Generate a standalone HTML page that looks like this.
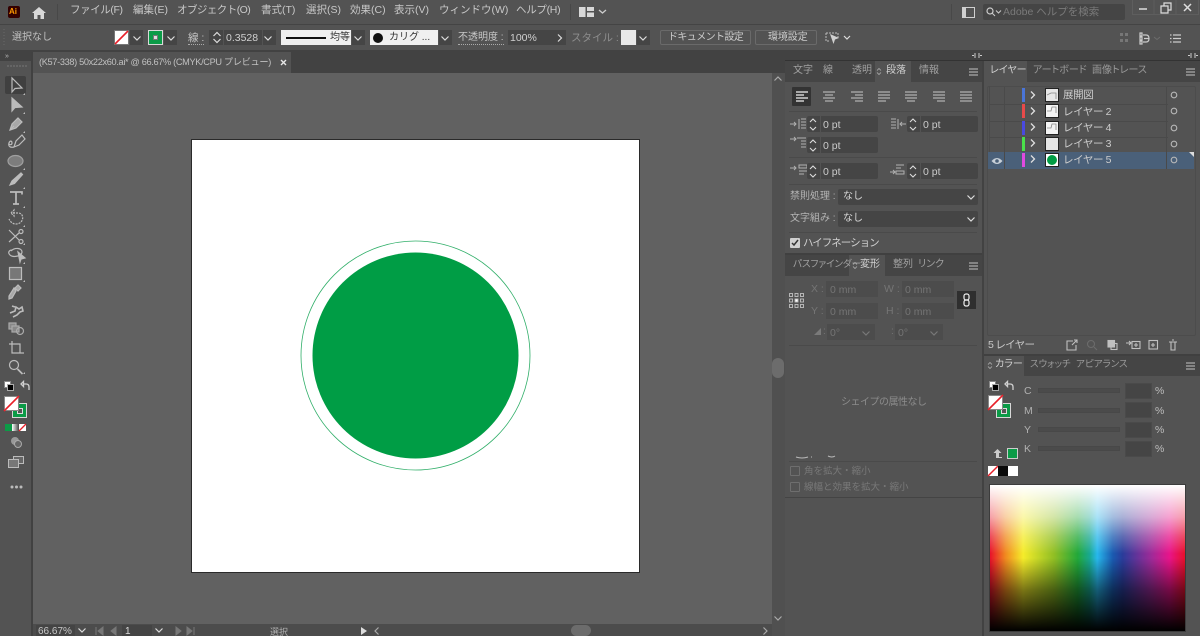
<!DOCTYPE html>
<html lang="ja"><head><meta charset="utf-8"><title>Illustrator</title>
<style>
html,body{margin:0;padding:0;width:1200px;height:636px;overflow:hidden;background:#535353}
body{position:relative;font-family:"Liberation Sans","Noto Sans CJK JP",sans-serif;font-size:10px;color:#c4c4c4}
body>*{filter:blur(.3px)}
.a{position:absolute;display:block;box-sizing:border-box}
.t{position:absolute;white-space:nowrap;line-height:14px;height:14px}
.m{font-size:10.5px;color:#c8c8c8;top:3px}
.p{font-feature-settings:"palt"}
.f{position:absolute;background:#454545;box-sizing:border-box}
.dim{color:#7a7a7a}
svg{position:absolute;overflow:visible}
.r{position:absolute;left:989px;width:178px;height:18px;border-bottom:1px solid #4a4a4a;border-left:1px solid #4a4a4a}
.lab{font-size:10.5px;color:#cccccc;left:1063px;letter-spacing:-.4px}
.th{position:absolute;left:1045px;width:14px;height:14px;background:#e6e6e6;border:1px solid #222;box-sizing:border-box}
</style></head><body>
<!-- top bars -->
<div class="a" style="left:0;top:0;width:1200px;height:24px;background:#535353"></div>
<div class="a" style="left:0;top:24px;width:1200px;height:1px;background:#444"></div>
<div class="a" style="left:0;top:50px;width:1200px;height:2px;background:#424242"></div>
<div class="a" style="left:8px;top:6px;width:12px;height:12px;background:#330000;border-radius:2px"></div>
<div class="t" style="left:9px;top:5px;font-size:8px;font-weight:bold;color:#ff9a00">Ai</div>
<svg style="left:31px;top:6px" width="16" height="14"><path d="M1 7L8 1l7 6h-2v6H9.500V9h-3v4H3V7z" fill="#d8d8d8"/></svg>
<div class="a" style="left:57px;top:4px;width:1px;height:16px;background:#484848"></div>
<span class="t m" style="left:70px;letter-spacing:-.4px">ファイル(F)</span>
<span class="t m" style="left:133px">編集(E)</span>
<span class="t m" style="left:177px;letter-spacing:-.55px">オブジェクト(O)</span>
<span class="t m" style="left:261px">書式(T)</span>
<span class="t m" style="left:306px">選択(S)</span>
<span class="t m" style="left:350px">効果(C)</span>
<span class="t m" style="left:394px">表示(V)</span>
<span class="t m" style="left:439px">ウィンドウ(W)</span>
<span class="t m" style="left:516px;letter-spacing:-.3px">ヘルプ(H)</span>
<div class="a" style="left:570px;top:4px;width:1px;height:16px;background:#484848"></div>
<svg style="left:579px;top:7px" width="28" height="10"><path d="M0 0h6.500v10H0zM8 0h7v4H8zM8 5.500h7V10H8z" fill="#d8d8d8"/><path d="M20 3l3.500 3L27 3" fill="none" stroke="#ccc" stroke-width="1.300"/></svg>
<div class="a" style="left:951px;top:4px;width:1px;height:16px;background:#484848"></div>
<svg style="left:962px;top:7px" width="13" height="11"><rect x=".5" y=".5" width="12" height="10" fill="none" stroke="#d0d0d0"/><rect x="1" y="1" width="3" height="9" fill="#d0d0d0"/></svg>
<div class="f" style="left:983px;top:4px;width:142px;height:16px;border-radius:2px"></div>
<svg style="left:986px;top:7px" width="16" height="10"><circle cx="4" cy="4" r="3" fill="none" stroke="#ccc" stroke-width="1.200"/><path d="M6 6l3 3M10 3.500l2.500 2.500L15 3.500" fill="none" stroke="#ccc"/></svg>
<span class="t dim" style="left:1003px;top:5px;font-size:10.500px">Adobe ヘルプを検索</span>
<svg style="left:1132px;top:0" width="68" height="15"><path d="M.5 0v14.500h66V0M22 0v14.500M44 0v14.500" fill="none" stroke="#5e5e5e"/><path d="M7 9h8" stroke="#ddd" stroke-width="1.500"/><path d="M29 6h7v7h-7zM32 6V3h7v7h-3" fill="none" stroke="#ddd" stroke-width="1.200"/><path d="M52 4l7 7M59 4l-7 7" stroke="#ddd" stroke-width="1.500"/></svg>

<!-- control bar -->
<svg style="left:3px;top:29px" width="3" height="18"><path d="M1 0v18" stroke="#6a6a6a" stroke-dasharray="1 2"/></svg>
<span class="t" style="left:12px;top:31px;font-size:10px;color:#c0c0c0">選択なし</span>
<div class="a" style="left:114px;top:30px;width:15px;height:15px;background:#fff;border:1px solid #777"></div>
<svg style="left:114px;top:30px" width="15" height="15"><path d="M1 14L14 1" stroke="#e8202a" stroke-width="1.600"/></svg>
<div class="f" style="left:130px;top:30px;width:13px;height:15px"></div>
<svg style="left:133px;top:36px" width="8" height="5"><path d="M.5.500L4 4 7.500.500" fill="none" stroke="#ddd" stroke-width="1.200"/></svg>
<div class="a" style="left:148px;top:30px;width:15px;height:15px;background:#0b9b47;border:1px solid #d8d8d8"></div>
<div class="a" style="left:153px;top:35px;width:5px;height:5px;background:#ddd;border:1px solid #777"></div>
<div class="f" style="left:164px;top:30px;width:13px;height:15px"></div>
<svg style="left:167px;top:36px" width="8" height="5"><path d="M.5.500L4 4 7.500.500" fill="none" stroke="#ddd" stroke-width="1.200"/></svg>
<span class="t" style="left:188px;top:31px;font-size:10.500px;color:#c8c8c8;border-bottom:1px dotted #aaa;height:13px">線 :</span>
<div class="f" style="left:209px;top:30px;width:67px;height:15px"></div>
<svg style="left:212px;top:31px" width="10" height="13"><path d="M1.500 5L5 1.500 8.500 5M1.500 8L5 11.500 8.500 8" fill="none" stroke="#ddd" stroke-width="1.200"/></svg>
<div class="a" style="left:223px;top:30px;width:1px;height:15px;background:#535353"></div>
<div class="a" style="left:262px;top:30px;width:1px;height:15px;background:#535353"></div>
<span class="t" style="left:226px;top:31px;font-size:10.500px;color:#d0d0d0">0.3528</span>
<svg style="left:264px;top:36px" width="8" height="5"><path d="M.5.500L4 4 7.500.500" fill="none" stroke="#ddd" stroke-width="1.200"/></svg>
<div class="a" style="left:281px;top:30px;width:70px;height:15px;background:#f0f0f0"></div>
<div class="a" style="left:286px;top:37px;width:40px;height:2px;background:#111"></div>
<span class="t" style="left:330px;top:31px;font-size:10px;color:#333">均等</span>
<div class="f" style="left:352px;top:30px;width:13px;height:15px"></div>
<svg style="left:354px;top:36px" width="8" height="5"><path d="M.5.500L4 4 7.500.500" fill="none" stroke="#ddd" stroke-width="1.200"/></svg>
<div class="a" style="left:370px;top:30px;width:68px;height:15px;background:#f0f0f0"></div>
<div class="a" style="left:373px;top:33px;width:10px;height:10px;background:#111;border-radius:50%"></div>
<span class="t" style="left:389px;top:31px;font-size:10px;color:#333">カリグ ...</span>
<div class="f" style="left:439px;top:30px;width:13px;height:15px"></div>
<svg style="left:441px;top:36px" width="8" height="5"><path d="M.5.500L4 4 7.500.500" fill="none" stroke="#ddd" stroke-width="1.200"/></svg>
<span class="t" style="left:458px;top:31px;font-size:10px;color:#c8c8c8;border-bottom:1px dotted #aaa;height:13px">不透明度 :</span>
<div class="f" style="left:508px;top:30px;width:58px;height:15px"></div>
<span class="t" style="left:510px;top:31px;font-size:10.500px;color:#d0d0d0">100%</span>
<svg style="left:557px;top:34px" width="6" height="8"><path d="M1 .500L4.500 4 1 7.500" fill="none" stroke="#ddd" stroke-width="1.200"/></svg>
<span class="t dim" style="left:571px;top:31px;font-size:10.500px;color:#8e8e8e">スタイル :</span>
<div class="a" style="left:621px;top:30px;width:15px;height:15px;background:#e8e8e8"></div>
<div class="f" style="left:637px;top:30px;width:13px;height:15px"></div>
<svg style="left:639px;top:36px" width="8" height="5"><path d="M.5.500L4 4 7.500.500" fill="none" stroke="#ddd" stroke-width="1.200"/></svg>
<div class="a" style="left:660px;top:30px;width:91px;height:15px;border:1px solid #6a6a6a;border-radius:2px"></div>
<span class="t" style="left:668px;top:31px;font-size:10px;color:#cccccc;letter-spacing:-.6px">ドキュメント設定</span>
<div class="a" style="left:755px;top:30px;width:62px;height:15px;border:1px solid #6a6a6a;border-radius:2px"></div>
<span class="t" style="left:768px;top:31px;font-size:10px;color:#cccccc;letter-spacing:-.1px">環境設定</span>
<svg style="left:825px;top:31px" width="26" height="14"><path d="M1 2h12v5M1 2v8h4" fill="none" stroke="#bbb" stroke-dasharray="2 1"/><path d="M5 3l9 4-4 1.500L8.500 13z" fill="#d0d0d0"/><path d="M19 5l3 3 3-3" fill="none" stroke="#ddd" stroke-width="1.200"/></svg>
<svg style="left:1119px;top:32px" width="64" height="13"><path d="M1 1h3v3H1zM6 1h3v3H6zM1 7h3v3H1zM6 7h3v3H6z" fill="#777"/><path d="M21 1h2v3h-2zM21 5h2v3h-2zM21 9h2v3h-2zM24 3h3q3 0 3 3.500T27 10h-3M25 6.500h5" fill="none" stroke="#ccc" stroke-width="1.200"/><path d="M35 5l3 2.500L41 5" fill="none" stroke="#6c6c6c"/><path d="M51 3h1.500M54 3h8M51 6.500h1.500M54 6.500h8M51 10h1.500M54 10h8" stroke="#ccc" stroke-width="1.300"/></svg>

<!-- left toolbar region -->
<div class="a" style="left:0;top:52px;width:33px;height:584px;background:#535353"></div>
<div class="a" style="left:0;top:52px;width:33px;height:9px;background:#424242"></div>
<div class="t" style="left:5px;top:50px;font-size:7px;color:#bbb">»</div>
<svg style="left:7px;top:65px" width="20" height="2"><path d="M0 1h20" stroke="#777" stroke-dasharray="2 1"/></svg>
<div class="a" style="left:31px;top:52px;width:2px;height:584px;background:#414141"></div>
<div class="a" style="left:5px;top:76px;width:21px;height:18px;background:#404040;border-radius:2px"></div>
<svg style="left:0;top:72px" width="32" height="420">
<g fill="none" stroke="#bcbcbc" stroke-width="1.200">
<path d="M12 6v14l3-3.500 7-.5z"/>
<path d="M12 26v13l3-3.500 7-.5z" fill="#bcbcbc"/>
<path d="M10 58l2-6 6-6 4 4-6 6zM10 58l4-4" fill="#a8a8a8"/>
<path d="M14 75l2-6 6-6 3 4-6 6zM14 75c-4 1-6-1-5-4s3-2 3 0-2 2-3 1"/>
<ellipse cx="15.500" cy="89" rx="7.500" ry="5.500" fill="#7d7d7d" stroke="#a0a0a0"/>
<path d="M10 113l2-4 9-8 1.500 1.500-8 9z" fill="#bcbcbc"/>
<path d="M10 120h12v2.500M16 120v12M13 132h6" stroke-width="1.700"/>
<path d="M11 141l3-3v6zM13 141h5c7 0 6 11-2 11-4 0-6-3-7-5" stroke-dasharray="2 1"/>
<path d="M9 158l10 10M9 170l10-9"/>
<circle cx="21" cy="159.500" r="2"/><circle cx="21" cy="169.500" r="2"/>
<path d="M11 179c4-4 11-3 11 1s-9 6-12 3 0-5 2-5"/>
<path d="M18 180l7 6-4 1-1 3z" fill="#bcbcbc"/>
<rect x="9.500" y="195.500" width="12" height="12" fill="#777"/>
<path d="M14 216l2 3-4 7-3 1 0-3zM15 216l3-3 3 3-3 3z" fill="#a8a8a8"/>
<path d="M10 241l5-2 1-4 3 2 3-2 1 4-3 1-3 3-4 2M12 234l3 1" stroke-width="1.600"/>
<rect x="9" y="251" width="7" height="6" fill="#888" stroke="#aaa"/><rect x="12" y="254" width="7" height="6" fill="#888" stroke="#aaa"/><circle cx="20" cy="259" r="3.500" stroke="#aaa"/>
<path d="M12 269v12h12M9 272h11v9"/>
<circle cx="14" cy="293" r="4.500"/><path d="M17.500 297l5 5" stroke-width="1.700"/>
</g>
<g fill="#bcbcbc"><path d="M25 21l-2 2h2zM25 40l-2 2h2zM25 59l-2 2h2zM25 96l-2 2h2zM25 115l-2 2h2zM25 134l-2 2h2zM25 153l-2 2h2zM25 171l-2 2h2zM25 190l-2 2h2zM25 208l-2 2h2zM25 300l-2 2h2z"/></g>
</svg>
<div class="a" style="left:4px;top:381px;width:7px;height:7px;background:#fff;border:1px solid #888"></div>
<div class="a" style="left:7px;top:384px;width:7px;height:7px;background:#000;border:1px solid #aaa"></div>
<svg style="left:20px;top:381px" width="10" height="10"><path d="M1 3l2.500-2.500V5.500zM3 3h3q3 0 3 3v3" fill="none" stroke="#d0d0d0" stroke-width="1.300"/></svg>
<div class="a" style="left:12px;top:403px;width:15px;height:15px;background:#0b9b47;border:1px solid #d8d8d8"></div>
<div class="a" style="left:17px;top:408px;width:6px;height:6px;background:#555;border:1px solid #ddd"></div>
<div class="a" style="left:4px;top:396px;width:15px;height:15px;background:#fff;border:1px solid #888"></div>
<svg style="left:4px;top:396px" width="15" height="15"><path d="M0 15L15 0" stroke="#e8202a" stroke-width="1.600"/></svg>
<div class="a" style="left:5px;top:424px;width:7px;height:7px;background:#0b9b47"></div>
<div class="a" style="left:12px;top:424px;width:7px;height:7px;background:linear-gradient(90deg,#fff,#444)"></div>
<div class="a" style="left:19px;top:424px;width:7px;height:7px;background:#fff"></div>
<svg style="left:19px;top:424px" width="7" height="7"><path d="M0 7L7 0" stroke="#e8202a" stroke-width="1.300"/></svg>
<svg style="left:9px;top:436px" width="16" height="12"><circle cx="6" cy="5" r="4" fill="#999"/><circle cx="9" cy="8" r="3.500" fill="#666" stroke="#aaa"/></svg>
<svg style="left:8px;top:456px" width="16" height="12"><rect x="5.500" y=".5" width="10" height="7" fill="#666" stroke="#bbb"/><rect x=".5" y="3.500" width="10" height="8" fill="#777" stroke="#bbb"/></svg>
<svg style="left:10px;top:485px" width="13" height="4"><circle cx="2" cy="2" r="1.500" fill="#bbb"/><circle cx="6.500" cy="2" r="1.500" fill="#bbb"/><circle cx="11" cy="2" r="1.500" fill="#bbb"/></svg>

<!-- tab bar -->
<div class="a" style="left:33px;top:52px;width:752px;height:21px;background:#424242"></div>
<div class="a" style="left:33px;top:52px;width:258px;height:21px;background:#535353"></div>
<span class="t" style="left:39px;top:55px;font-size:9.200px;color:#c0c0c0;letter-spacing:-.33px">(K57-338) 50x22x60.ai* @ 66.67% (CMYK/CPU プレビュー)</span>
<svg style="left:280px;top:59px" width="7" height="7"><path d="M1 1l5 5M6 1L1 6" stroke="#e8e8e8" stroke-width="1.400"/></svg>

<!-- canvas -->
<div class="a" style="left:33px;top:73px;width:739px;height:551px;background:#616161"></div>
<div class="a" style="left:191px;top:139px;width:449px;height:434px;background:#fff;border:1px solid #2a2a2a"></div>
<svg style="left:290px;top:230px" width="250" height="250"><circle cx="125.500" cy="125.500" r="114.500" fill="none" stroke="#2fae68" stroke-width=".8"/><circle cx="125.500" cy="125.500" r="103" fill="#009d45"/></svg>

<!-- scrollbars -->
<div class="a" style="left:772px;top:73px;width:13px;height:563px;background:#505050"></div>
<div class="a" style="left:772px;top:358px;width:12px;height:20px;background:#6c6c6c;border-radius:6px"></div>
<svg style="left:774px;top:76px" width="8" height="5"><path d="M.5 4.500L4 1l3.500 3.500" fill="none" stroke="#aaa" stroke-width="1.200"/></svg>
<svg style="left:774px;top:616px" width="8" height="5"><path d="M.5.500L4 4 7.500.500" fill="none" stroke="#aaa" stroke-width="1.200"/></svg>
<div class="a" style="left:33px;top:624px;width:739px;height:12px;background:#4c4c4c"></div>
<div class="f" style="left:36px;top:625px;width:39px;height:11px;background:#444"></div>
<span class="t" style="left:38px;top:625px;font-size:10px;color:#c8c8c8">66.67%</span>
<svg style="left:78px;top:628px" width="8" height="5"><path d="M.5.500L4 4 7.500.500" fill="none" stroke="#ddd" stroke-width="1.200"/></svg>
<svg style="left:95px;top:627px" width="24" height="8"><path d="M1 0v8M8 0L3 4l5 4zM21 0L16 4l5 4z" fill="#777" stroke="#777"/></svg>
<div class="f" style="left:122px;top:625px;width:30px;height:11px;background:#444"></div>
<span class="t" style="left:125px;top:625px;font-size:10px;color:#ddd">1</span>
<svg style="left:155px;top:628px" width="8" height="5"><path d="M.5.500L4 4 7.500.500" fill="none" stroke="#ddd" stroke-width="1.200"/></svg>
<svg style="left:175px;top:627px" width="20" height="8"><path d="M1 0l5 4-5 4zM12 0l5 4-5 4zM19 0v8" fill="#777" stroke="#777"/></svg>
<span class="t" style="left:270px;top:625px;font-size:9px;color:#b0b0b0">選択</span>
<svg style="left:361px;top:627px" width="6" height="8"><path d="M0 0l6 4-6 4z" fill="#ddd"/></svg>
<svg style="left:374px;top:627px" width="5" height="8"><path d="M4.500.500L1 4l3.500 3.500" fill="none" stroke="#aaa" stroke-width="1.200"/></svg>
<div class="a" style="left:571px;top:625px;width:20px;height:11px;background:#6c6c6c;border-radius:6px"></div>
<svg style="left:763px;top:627px" width="5" height="8"><path d="M.5.500L4 4 .5 7.500" fill="none" stroke="#aaa" stroke-width="1.200"/></svg>

<!-- right panel backgrounds -->
<div class="a" style="left:785px;top:52px;width:415px;height:584px;background:#535353"></div>
<div class="a" style="left:785px;top:52px;width:415px;height:8px;background:#424242"></div>
<div class="a" style="left:982px;top:52px;width:2px;height:584px;background:#424242"></div>
<div class="a" style="left:785px;top:60px;width:415px;height:1px;background:#333"></div>
<svg style="left:972px;top:53px" width="10" height="5"><path d="M0 2.500h2M8 2.500h2" stroke="#ccc"/><path d="M3 0v5M7 0v5" stroke="#ccc"/></svg>
<svg style="left:1188px;top:53px" width="10" height="5"><path d="M0 2.500h2M8 2.500h2" stroke="#ccc"/><path d="M3 0v5M7 0v5" stroke="#ccc"/></svg>

<!-- Paragraph panel tabs -->
<div class="a" style="left:785px;top:61px;width:197px;height:21px;background:#454545"></div>
<div class="a" style="left:875px;top:61px;width:36px;height:21px;background:#535353"></div>
<span class="t" style="left:793px;top:64px;color:#a0a0a0">文字</span>
<span class="t" style="left:823px;top:64px;color:#a0a0a0">線</span>
<span class="t" style="left:852px;top:64px;color:#a0a0a0">透明</span>
<span class="t" style="left:886px;top:64px;color:#d0d0d0">段落</span>
<span class="t" style="left:919px;top:64px;color:#a0a0a0">情報</span>
<svg style="left:877px;top:68px" width="4" height="7"><path d="M0 2.500L2 .5l2 2M0 4.500l2 2 2-2" fill="none" stroke="#bbb" stroke-width=".7"/></svg>
<svg style="left:969px;top:68px" width="9" height="8"><path d="M0 1h9M0 4h9M0 7h9" stroke="#aaa" stroke-width="1.200"/></svg>
<!-- align buttons -->
<div class="a" style="left:792px;top:87px;width:19px;height:19px;background:#333;border-radius:1px"></div>
<svg style="left:796px;top:91px" width="176" height="11"><g stroke-width="1.200">
<path d="M0 1h12M0 4h8M0 7h12M0 10h8" stroke="#eee"/>
<path d="M27 1h12M29 4h8M27 7h12M29 10h8M55 1h12M59 4h8M55 7h12M59 10h8M82 1h12M82 4h12M82 7h12M82 10h8M109 1h12M109 4h12M109 7h12M111 10h8M137 1h12M137 4h12M137 7h12M141 10h8M164 1h12M164 4h12M164 7h12M164 10h12" stroke="#b0b0b0"/></g></svg>
<div class="a" style="left:789px;top:111px;width:188px;height:1px;background:#4a4a4a"></div>
<!-- indent fields -->
<svg style="left:790px;top:118px" width="190" height="62"><g stroke="#b0b0b0" fill="none"><path d="M0 6h6M4 4l2 2-2 2M9 1v10M11 1h5M11 4h5M11 7h5M11 10h5"/><path d="M101 1h5M101 4h5M101 7h5M101 10h5M108 1v10M110 6h6M112 4l-2 2 2 2"/><path d="M0 21h6M4 19l2 2-2 2M7 20h9M11 23h5M11 26h5M11 29h5"/><path d="M0 50h6M4 48l2 2-2 2M9 47h8v3H9zM9 53h8M9 56h5"/><path d="M106 47h8M106 50h5M106 53h8v3h-8zM100 54h5M103 52l2 2-2 2"/></g></svg>
<div class="f" style="left:807px;top:116px;width:71px;height:16px;border-radius:2px"></div>
<div class="f" style="left:907px;top:116px;width:71px;height:16px;border-radius:2px"></div>
<div class="f" style="left:807px;top:137px;width:71px;height:16px;border-radius:2px"></div>
<div class="f" style="left:807px;top:163px;width:71px;height:16px;border-radius:2px"></div>
<div class="f" style="left:907px;top:163px;width:71px;height:16px;border-radius:2px"></div>
<div class="a" style="left:820px;top:116px;width:1px;height:63px;background:#535353"></div>
<div class="a" style="left:920px;top:116px;width:1px;height:16px;background:#535353"></div>
<div class="a" style="left:920px;top:163px;width:1px;height:16px;background:#535353"></div>
<div class="a" style="left:807px;top:132px;width:14px;height:5px;background:#535353"></div>
<div class="a" style="left:807px;top:153px;width:14px;height:10px;background:#535353"></div>
<svg style="left:809px;top:118px" width="122" height="61" fill="none" stroke="#ddd" stroke-width="1.100"><path d="M1 4l3-3 3 3M1 9l3 3 3-3M1 25l3-3 3 3M1 30l3 3 3-3M1 51l3-3 3 3M1 56l3 3 3-3M101 4l3-3 3 3M101 9l3 3 3-3M101 51l3-3 3 3M101 56l3 3 3-3"/></svg>
<span class="t" style="left:823px;top:118px;font-size:10.500px;color:#cccccc">0 pt</span>
<span class="t" style="left:923px;top:118px;font-size:10.500px;color:#cccccc">0 pt</span>
<span class="t" style="left:823px;top:139px;font-size:10.500px;color:#cccccc">0 pt</span>
<span class="t" style="left:823px;top:165px;font-size:10.500px;color:#cccccc">0 pt</span>
<span class="t" style="left:923px;top:165px;font-size:10.500px;color:#cccccc">0 pt</span>
<div class="a" style="left:789px;top:157px;width:188px;height:1px;background:#4a4a4a"></div>
<div class="a" style="left:789px;top:184px;width:188px;height:1px;background:#4a4a4a"></div>
<span class="t" style="left:790px;top:190px;color:#b4b4b4">禁則処理 :</span>
<div class="f" style="left:838px;top:189px;width:140px;height:16px;border-radius:2px"></div>
<span class="t" style="left:843px;top:190px;color:#d8d8d8">なし</span>
<svg style="left:967px;top:195px" width="8" height="5"><path d="M.5.500L4 4 7.500.500" fill="none" stroke="#ddd" stroke-width="1.200"/></svg>
<span class="t" style="left:790px;top:212px;color:#b4b4b4">文字組み :</span>
<div class="f" style="left:838px;top:211px;width:140px;height:16px;border-radius:2px"></div>
<span class="t" style="left:843px;top:212px;color:#d8d8d8">なし</span>
<svg style="left:967px;top:217px" width="8" height="5"><path d="M.5.500L4 4 7.500.500" fill="none" stroke="#ddd" stroke-width="1.200"/></svg>
<div class="a" style="left:789px;top:232px;width:188px;height:1px;background:#4a4a4a"></div>
<div class="a" style="left:790px;top:238px;width:10px;height:10px;background:#cfcfcf;border-radius:1px"></div>
<svg style="left:791px;top:239px" width="8" height="8"><path d="M1 4l2 2 4-5" fill="none" stroke="#333" stroke-width="1.500"/></svg>
<span class="t" style="left:803px;top:236px;font-size:10.500px;color:#d0d0d0;letter-spacing:-1px">ハイフネーション</span>

<!-- Transform panel -->
<div class="a" style="left:785px;top:253px;width:197px;height:2px;background:#404040"></div>
<div class="a" style="left:785px;top:255px;width:197px;height:21px;background:#454545"></div>
<div class="a" style="left:849px;top:255px;width:36px;height:21px;background:#535353"></div>
<span class="t p" style="left:793px;top:258px;font-size:9.500px;color:#a0a0a0">パスファインダー</span>
<svg style="left:853px;top:262px" width="4" height="7"><path d="M0 2.500L2 .5l2 2M0 4.500l2 2 2-2" fill="none" stroke="#bbb" stroke-width=".7"/></svg>
<span class="t" style="left:860px;top:258px;color:#d0d0d0">変形</span>
<span class="t" style="left:893px;top:258px;color:#a0a0a0">整列</span>
<span class="t p" style="left:918px;top:258px;color:#a0a0a0">リンク</span>
<svg style="left:969px;top:262px" width="9" height="8"><path d="M0 1h9M0 4h9M0 7h9" stroke="#aaa" stroke-width="1.200"/></svg>
<svg style="left:789px;top:293px" width="15" height="15" fill="#555" stroke="#c0c0c0" stroke-width=".9"><rect x=".5" y=".5" width="3" height="3"/><rect x="6" y=".5" width="3" height="3"/><rect x="11.500" y=".5" width="3" height="3"/><rect x=".5" y="6" width="3" height="3"/><rect x="6" y="6" width="3" height="3" fill="#fff"/><rect x="11.500" y="6" width="3" height="3"/><rect x=".5" y="11.500" width="3" height="3"/><rect x="6" y="11.500" width="3" height="3"/><rect x="11.500" y="11.500" width="3" height="3"/></svg>
<span class="t" style="left:811px;top:282px;color:#757575;font-size:10.500px">X :</span>
<div class="f" style="left:826px;top:281px;width:52px;height:16px;background:#4c4c4c"></div>
<span class="t" style="left:830px;top:283px;color:#747474;font-size:10.500px">0 mm</span>
<span class="t" style="left:884px;top:282px;color:#757575;font-size:10.500px">W :</span>
<div class="f" style="left:902px;top:281px;width:52px;height:16px;background:#4c4c4c"></div>
<span class="t" style="left:905px;top:283px;color:#747474;font-size:10.500px">0 mm</span>
<span class="t" style="left:811px;top:304px;color:#757575;font-size:10.500px">Y :</span>
<div class="f" style="left:826px;top:303px;width:52px;height:16px;background:#4c4c4c"></div>
<span class="t" style="left:830px;top:305px;color:#747474;font-size:10.500px">0 mm</span>
<span class="t" style="left:886px;top:304px;color:#757575;font-size:10.500px">H :</span>
<div class="f" style="left:902px;top:303px;width:52px;height:16px;background:#4c4c4c"></div>
<span class="t" style="left:905px;top:305px;color:#747474;font-size:10.500px">0 mm</span>
<div class="a" style="left:957px;top:291px;width:19px;height:18px;background:#2f2f2f"></div>
<svg style="left:963px;top:293px" width="7" height="14" fill="none" stroke="#eee" stroke-width="1.200"><rect x="1" y="1" width="5" height="6" rx="2"/><rect x="1" y="7" width="5" height="6" rx="2"/></svg>
<svg style="left:813px;top:327px" width="100" height="10"><path d="M1 8l7-7v7zM84 8l2-7h6l-2 7z" fill="#7a7a7a"/></svg>
<span class="t" style="left:823px;top:325px;color:#757575">:</span>
<div class="f" style="left:827px;top:324px;width:48px;height:16px;background:#4c4c4c"></div>
<span class="t" style="left:830px;top:326px;color:#747474;font-size:10.500px">0°</span>
<svg style="left:862px;top:331px" width="8" height="5"><path d="M.5.500L4 4 7.500.500" fill="none" stroke="#777" stroke-width="1.200"/></svg>
<span class="t" style="left:891px;top:325px;color:#757575">:</span>
<div class="f" style="left:895px;top:324px;width:48px;height:16px;background:#4c4c4c"></div>
<span class="t" style="left:898px;top:326px;color:#747474;font-size:10.500px">0°</span>
<svg style="left:930px;top:331px" width="8" height="5"><path d="M.5.500L4 4 7.500.500" fill="none" stroke="#777" stroke-width="1.200"/></svg>
<div class="a" style="left:789px;top:345px;width:188px;height:1px;background:#4a4a4a"></div>
<span class="t" style="left:841px;top:396px;font-size:10px;color:#8c8c8c;letter-spacing:-.5px">シェイプの属性なし</span>
<div class="a" style="left:789px;top:461px;width:188px;height:1px;background:#4a4a4a"></div>
<svg style="left:795px;top:455px" width="60" height="4"><path d="M1 2q6 2 12 0M16 2h1M33 1q4 2 7 0" stroke="#bbb" fill="none"/></svg>
<div class="a" style="left:790px;top:466px;width:10px;height:10px;border:1px solid #6e6e6e;border-radius:1px"></div>
<span class="t" style="left:804px;top:465px;color:#787878;font-size:9.500px">角を拡大・縮小</span>
<div class="a" style="left:790px;top:482px;width:10px;height:10px;border:1px solid #6e6e6e;border-radius:1px"></div>
<span class="t" style="left:804px;top:481px;color:#787878;font-size:9.500px">線幅と効果を拡大・縮小</span>
<div class="a" style="left:785px;top:497px;width:197px;height:1px;background:#444"></div>

<!-- Layers panel -->
<div class="a" style="left:984px;top:61px;width:216px;height:21px;background:#454545"></div>
<div class="a" style="left:984px;top:61px;width:43px;height:21px;background:#535353"></div>
<span class="t p" style="left:990px;top:64px;color:#d0d0d0">レイヤー</span>
<span class="t p" style="left:1033px;top:64px;color:#989898">アートボード</span>
<span class="t p" style="left:1092px;top:64px;color:#989898">画像トレース</span>
<svg style="left:1186px;top:68px" width="9" height="8"><path d="M0 1h9M0 4h9M0 7h9" stroke="#aaa" stroke-width="1.200"/></svg>
<div class="a" style="left:987px;top:86px;width:209px;height:250px;border:1px solid #4c4c4c;border-radius:2px"></div>
<div class="r" style="top:86px"></div><div class="r" style="top:103px"></div><div class="r" style="top:119px"></div><div class="r" style="top:135px"></div>
<div class="a" style="left:988px;top:152px;width:206px;height:17px;background:#4a6079"></div>
<svg style="left:1189px;top:152px" width="5" height="5"><path d="M0 0h5v5z" fill="#ddd"/></svg>
<div class="a" style="left:1004px;top:87px;width:1px;height:82px;background:#4a4a4a"></div>
<div class="a" style="left:1166px;top:87px;width:1px;height:82px;background:#4a4a4a"></div>
<div class="a" style="left:1022px;top:88px;width:3px;height:14px;background:#4a75d8"></div>
<div class="a" style="left:1022px;top:104px;width:3px;height:14px;background:#e84a4a"></div>
<div class="a" style="left:1022px;top:121px;width:3px;height:14px;background:#4a4ae0"></div>
<div class="a" style="left:1022px;top:137px;width:3px;height:14px;background:#4ae04a"></div>
<div class="a" style="left:1022px;top:153px;width:3px;height:14px;background:#e04ae0"></div>
<svg style="left:1030px;top:91px" width="6" height="72" fill="none" stroke="#e0e0e0" stroke-width="1.300"><path d="M1 .5L4.500 4 1 7.500M1 16.500L4.500 20 1 23.500M1 32.500L4.500 36 1 39.500M1 48.500L4.500 52 1 55.500M1 64.500L4.500 68 1 71.500"/></svg>
<div class="th" style="top:88px"></div><div class="th" style="top:104px;background:#f4f4f4"></div><div class="th" style="top:121px;background:#f4f4f4"></div><div class="th" style="top:137px"></div><div class="th" style="top:153px;background:#fff"></div>
<div class="a" style="left:1047px;top:155px;width:10px;height:10px;border-radius:50%;background:#009d45"></div>
<svg style="left:1046px;top:89px" width="12" height="44" fill="none" stroke="#888" stroke-width=".8"><path d="M1 6l4-2h5v6M1 22h4l1-4h4v6M1 39h4l1-4h4v6"/></svg>
<span class="t lab" style="top:88px">展開図</span>
<span class="t lab" style="top:105px">レイヤー 2</span>
<span class="t lab" style="top:121px">レイヤー 4</span>
<span class="t lab" style="top:137px">レイヤー 3</span>
<span class="t lab" style="top:153px">レイヤー 5</span>
<svg style="left:1170px;top:91px" width="8" height="72" fill="none" stroke="#b8b8b8" stroke-width="1.100"><circle cx="4" cy="4" r="2.800"/><circle cx="4" cy="20" r="2.800"/><circle cx="4" cy="37" r="2.800"/><circle cx="4" cy="53" r="2.800"/><circle cx="4" cy="69" r="2.800"/></svg>
<svg style="left:991px;top:157px" width="12" height="8"><path d="M.5 4Q6-2 11.500 4 6 10 .5 4z" fill="#c8d0d8"/><circle cx="6" cy="4" r="1.800" fill="#4a6079"/></svg>
<span class="t" style="left:988px;top:338px;font-size:10.500px;color:#c8c8c8;letter-spacing:-.7px">5 レイヤー</span>
<svg style="left:1066px;top:339px" width="120" height="12" fill="none" stroke="#c0c0c0" stroke-width="1.100">
<path d="M7 2H1v9h9V6M6 6l5-5M8 1h3v3"/>
<circle cx="25" cy="5" r="3.500" stroke="#6c6c6c"/><path d="M28 8l3 3" stroke="#6c6c6c"/>
<rect x="42" y="1.500" width="6.500" height="6.500" fill="#c0c0c0"/><rect x="45" y="4.500" width="6" height="6"/>
<path d="M60 4h5M63 2l2 2-2 2"/><rect x="66" y="2.500" width="8" height="7"/><path d="M70 4v4M68 6h4"/>
<rect x="83" y="1.500" width="8.500" height="8.500"/><path d="M87 4v4M85 6h4"/>
<path d="M103 3h8M105 3v8h4V3M106 1h2"/>
</svg>
<div class="a" style="left:984px;top:354px;width:216px;height:2px;background:#404040"></div>

<!-- Color panel -->
<div class="a" style="left:984px;top:356px;width:216px;height:20px;background:#454545"></div>
<div class="a" style="left:984px;top:356px;width:40px;height:20px;background:#535353"></div>
<svg style="left:988px;top:362px" width="4" height="7"><path d="M0 2.500L2 .5l2 2M0 4.500l2 2 2-2" fill="none" stroke="#bbb" stroke-width=".7"/></svg>
<span class="t p" style="left:995px;top:358px;color:#d0d0d0">カラー</span>
<span class="t p" style="left:1030px;top:358px;font-size:9.500px;color:#989898">スウォッチ</span>
<span class="t p" style="left:1076px;top:358px;font-size:9.500px;color:#989898">アピアランス</span>
<svg style="left:1186px;top:362px" width="9" height="8"><path d="M0 1h9M0 4h9M0 7h9" stroke="#aaa" stroke-width="1.200"/></svg>
<div class="a" style="left:989px;top:381px;width:7px;height:7px;background:#fff;border:1px solid #888"></div>
<div class="a" style="left:992px;top:384px;width:7px;height:7px;background:#000;border:1px solid #aaa"></div>
<svg style="left:1004px;top:381px" width="10" height="10"><path d="M1 3l2.500-2.500V5.500zM3 3h3q3 0 3 3v3" fill="none" stroke="#d0d0d0" stroke-width="1.300"/></svg>
<div class="a" style="left:996px;top:403px;width:15px;height:15px;background:#0b9b47;border:1px solid #d8d8d8"></div>
<div class="a" style="left:1001px;top:408px;width:6px;height:6px;background:#555;border:1px solid #ddd"></div>
<div class="a" style="left:988px;top:395px;width:15px;height:15px;background:#fff;border:1px solid #888"></div>
<svg style="left:988px;top:395px" width="15" height="15"><path d="M0 15L15 0" stroke="#e8202a" stroke-width="1.600"/></svg>
<span class="t" style="left:1024px;top:384px;font-size:10.500px;color:#b0b0b0">C</span>
<span class="t" style="left:1024px;top:404px;font-size:10.500px;color:#b0b0b0">M</span>
<span class="t" style="left:1024px;top:423px;font-size:10.500px;color:#b0b0b0">Y</span>
<span class="t" style="left:1024px;top:442px;font-size:10.500px;color:#b0b0b0">K</span>
<div class="f" style="left:1038px;top:388px;width:82px;height:5px;background:#4b4b4b;border:1px solid #484848"></div>
<div class="f" style="left:1038px;top:408px;width:82px;height:5px;background:#4b4b4b;border:1px solid #484848"></div>
<div class="f" style="left:1038px;top:427px;width:82px;height:5px;background:#4b4b4b;border:1px solid #484848"></div>
<div class="f" style="left:1038px;top:446px;width:82px;height:5px;background:#4b4b4b;border:1px solid #484848"></div>
<div class="f" style="left:1125px;top:383px;width:27px;height:16px;border:1px solid #4a4a4a"></div>
<div class="f" style="left:1125px;top:402px;width:27px;height:16px;border:1px solid #4a4a4a"></div>
<div class="f" style="left:1125px;top:422px;width:27px;height:16px;border:1px solid #4a4a4a"></div>
<div class="f" style="left:1125px;top:441px;width:27px;height:16px;border:1px solid #4a4a4a"></div>
<span class="t" style="left:1155px;top:384px;font-size:10.500px;color:#bcbcbc">%</span>
<span class="t" style="left:1155px;top:404px;font-size:10.500px;color:#bcbcbc">%</span>
<span class="t" style="left:1155px;top:423px;font-size:10.500px;color:#bcbcbc">%</span>
<span class="t" style="left:1155px;top:442px;font-size:10.500px;color:#bcbcbc">%</span>
<svg style="left:993px;top:449px" width="9" height="9"><path d="M4.500 0L8.500 4H6v4h3v1H3V4H.5z" fill="#ccc"/></svg>
<div class="a" style="left:1007px;top:448px;width:11px;height:11px;background:#0b9b47;border:1px solid #ccc"></div>
<div class="a" style="left:988px;top:466px;width:10px;height:10px;background:#fff"></div>
<svg style="left:988px;top:466px" width="10" height="10"><path d="M0 10L10 0" stroke="#e8202a" stroke-width="1.500"/></svg>
<div class="a" style="left:998px;top:466px;width:10px;height:10px;background:#0a0a0a"></div>
<div class="a" style="left:1008px;top:466px;width:10px;height:10px;background:#fff"></div>
<!-- spectrum -->
<div class="a" style="left:989px;top:484px;width:197px;height:148px;border:1px solid #3c3c3c;background:
linear-gradient(180deg,#fff 0%,rgba(255,255,255,.6) 22%,rgba(255,255,255,.25) 35%,rgba(255,255,255,0) 47%,rgba(0,0,0,0) 50%,rgba(0,0,0,.5) 72%,#000 100%),
linear-gradient(90deg,#e8102a 0%,#f08a20 8%,#f5ec2a 17%,#8fbe24 33%,#22a83a 45%,#18a890 51%,#28b8ec 55%,#1a5ab0 63%,#2a3c9a 68%,#a02a98 83%,#e8148a 92%,#e8102a 100%)"></div>
</body></html>
